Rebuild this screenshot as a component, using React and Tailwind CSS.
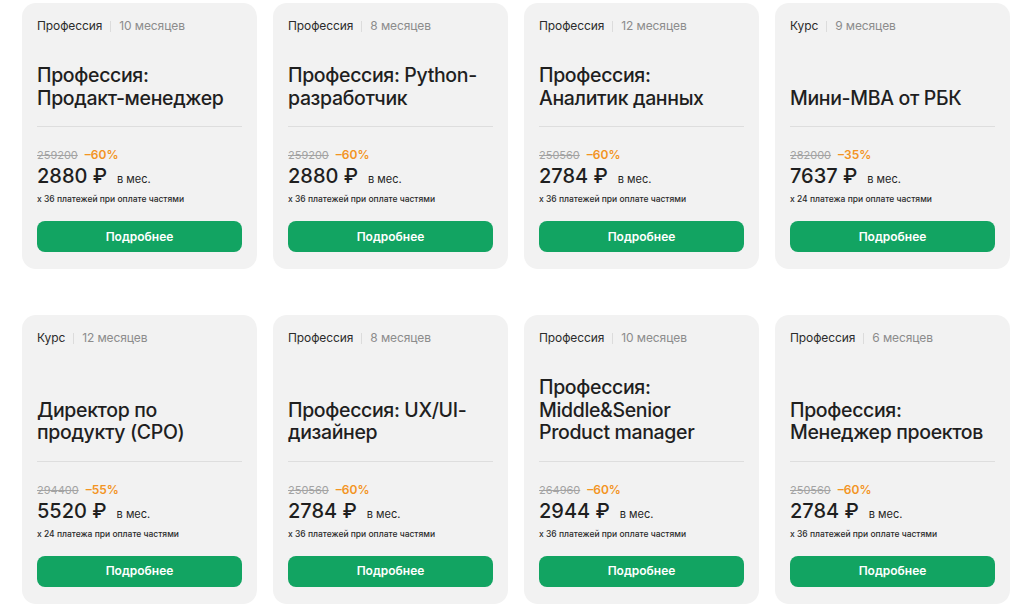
import React from "react";

const cards = [
  { type: "Профессия", dur: "10 месяцев", title: ["Профессия:", "Продакт-менеджер"], old: "259200", disc: "–60%", price: "2880 ₽", note: "x 36 платежей при оплате частями" },
  { type: "Профессия", dur: "8 месяцев", title: ["Профессия: Python-", "разработчик"], old: "259200", disc: "–60%", price: "2880 ₽", note: "x 36 платежей при оплате частями" },
  { type: "Профессия", dur: "12 месяцев", title: ["Профессия:", "Аналитик данных"], old: "250560", disc: "–60%", price: "2784 ₽", note: "x 36 платежей при оплате частями" },
  { type: "Курс", dur: "9 месяцев", title: ["Мини-MBA от РБК"], old: "282000", disc: "–35%", price: "7637 ₽", note: "x 24 платежа при оплате частями" },
  { type: "Курс", dur: "12 месяцев", title: ["Директор по", "продукту (CPO)"], old: "294400", disc: "–55%", price: "5520 ₽", note: "x 24 платежа при оплате частями" },
  { type: "Профессия", dur: "8 месяцев", title: ["Профессия: UX/UI-", "дизайнер"], old: "250560", disc: "–60%", price: "2784 ₽", note: "x 36 платежей при оплате частями" },
  { type: "Профессия", dur: "10 месяцев", title: ["Профессия:", "Middle&Senior", "Product manager"], old: "264960", disc: "–60%", price: "2944 ₽", note: "x 36 платежей при оплате частями" },
  { type: "Профессия", dur: "6 месяцев", title: ["Профессия:", "Менеджер проектов"], old: "250560", disc: "–60%", price: "2784 ₽", note: "x 36 платежей при оплате частями" },
];

function Card({ c }) {
  return (
    <div className="flex flex-col rounded-[14px] bg-[#f2f2f2] px-[15px] pt-[15px] pb-[17px]">
      <div className="flex items-center text-[12px] leading-[16px] tracking-[-0.1px]">
        <span className="text-[#2b2b2b]">{c.type}</span>
        <span className="mx-[8px] h-[11px] w-px bg-[#dcdcdc]" />
        <span className="text-[#8c8c8c]">{c.dur}</span>
      </div>
      <div className="mt-[30px] flex flex-1 flex-col justify-end">
        <div className="text-[19.5px] leading-[22.5px] font-medium tracking-[-0.35px] text-[#1f1f1f]">
          {c.title.map((t, i) => (
            <div key={i}>{t}</div>
          ))}
        </div>
      </div>
      <div className="mt-[17px] h-px bg-[#dedede]" />
      <div className="mt-[21px] flex items-center gap-[7px] text-[11px] leading-[14px]">
        <span className="text-[#a3a3a3] line-through">{c.old}</span>
        <span className="text-[12px] font-semibold text-[#f39423]">{c.disc}</span>
      </div>
      <div className="mt-[2px] flex items-baseline gap-[10px] leading-[24px]">
        <span className="text-[20px] font-medium text-[#1f1f1f]">{c.price}</span>
        <span className="text-[11px] text-[#1f1f1f]">в мес.</span>
      </div>
      <div className="mt-[2px] text-[8.5px] leading-[12px] font-medium text-[#2b2b2b]">{c.note}</div>
      <button className="mt-[16px] h-[31px] w-full rounded-[8px] bg-[#12a462] text-[12px] font-semibold text-white">
        Подробнее
      </button>
    </div>
  );
}

export default function App() {
  return (
    <div className="min-h-[611px] bg-white pt-[3px] pl-[22px]" style={{ fontFamily: "Inter, 'Noto Sans', sans-serif" }}>
      <div className="grid grid-cols-[repeat(4,235px)] gap-x-[16px] gap-y-[46px]">
        {cards.map((c, i) => (
          <Card key={i} c={c} />
        ))}
      </div>
    </div>
  );
}
